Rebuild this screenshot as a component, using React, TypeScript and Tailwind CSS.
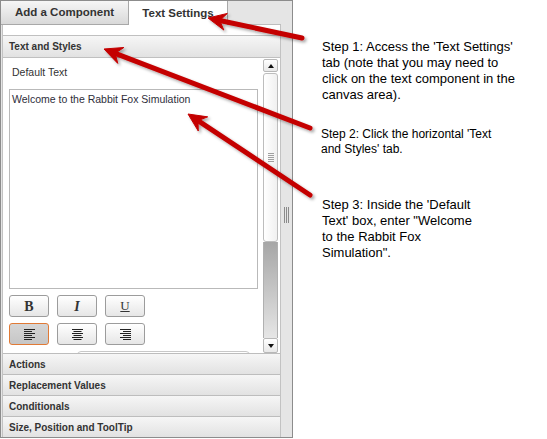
import React from "react"

const headerBg = "bg-gradient-to-b from-[#f6f6f6] to-[#e2e2e2]"

function Arrow({ x1, y1, x2, y2 }: { x1: number; y1: number; x2: number; y2: number }) {
  const dx = x2 - x1
  const dy = y2 - y1
  const len = Math.hypot(dx, dy)
  const ux = dx / len
  const uy = dy / len
  const nx = -uy
  const ny = ux
  const L = 18
  const W = 8.5
  const notch = 6
  const bx = x2 - ux * L
  const by = y2 - uy * L
  const mx = x2 - ux * (L - notch)
  const my = y2 - uy * (L - notch)
  const pts = [
    [x2, y2],
    [bx + nx * W, by + ny * W],
    [mx, my],
    [bx - nx * W, by - ny * W],
  ]
    .map((p) => p.join(","))
    .join(" ")
  return (
    <g filter="url(#shadow)">
      <line x1={x1} y1={y1} x2={mx} y2={my} stroke="#c40000" strokeWidth={5} strokeLinecap="round" />
      <polygon points={pts} fill="#c40000" stroke="#c40000" strokeWidth={1} strokeLinejoin="round" />
    </g>
  )
}

function AlignIcon({ mode }: { mode: "left" | "center" | "right" }) {
  const lens = [11, 8, 11, 8, 11, 8]
  return (
    <svg width="11" height="11" viewBox="0 0 11 11">
      {lens.map((l, i) => {
        const x = mode === "left" ? 0 : mode === "center" ? (11 - l) / 2 : 11 - l
        return <rect key={i} x={x} y={i * 2 - 0.5 + 0.5} width={l} height={1} fill="#222" />
      })}
    </svg>
  )
}

function ToolButton({ children, active }: { children: React.ReactNode; active?: boolean }) {
  return (
    <div
      className={
        "flex h-[22px] w-[40px] items-center justify-center rounded-[3px] border " +
        (active
          ? "border-[#e07a36] bg-gradient-to-b from-[#d6d6d6] to-[#c6c6c6]"
          : "border-[#9c9c9c] bg-gradient-to-b from-[#ffffff] to-[#e6e6e6]")
      }
    >
      {children}
    </div>
  )
}

function Accordion({ label }: { label: string }) {
  return (
    <div className={`flex h-[21px] items-center border-t border-[#bdbdbd] pl-[6px] text-[10px] font-bold text-[#333] ${headerBg}`}>
      {label}
    </div>
  )
}

function Scrollbar() {
  return (
    <div className="mr-[2px] flex w-[15px] flex-col pt-[1px]">
      <div className="flex h-[13px] items-center justify-center rounded-[2px] border border-[#b8b8b8] bg-gradient-to-b from-white to-[#e8e8e8]">
        <svg width="6" height="4" viewBox="0 0 6 4">
          <polygon points="3,0 6,4 0,4" fill="#111" />
        </svg>
      </div>
      <div className="mt-[1px] flex h-[169px] items-center justify-center rounded-[3px] border border-[#bdbdbd] bg-gradient-to-r from-white to-[#f0f0f0]">
        <div className="flex flex-col gap-[1px]">
          {[0, 1, 2, 3, 4].map((i) => (
            <div key={i} className="h-[1px] w-[6px] bg-[#a0a0a0]" />
          ))}
        </div>
      </div>
      <div className="flex-1 border-x border-[#b0b0b0] bg-gradient-to-b from-[#a6a6a6] to-[#e6e6e6]" />
      <div className="flex h-[15px] items-center justify-center rounded-[2px] border border-[#b8b8b8] bg-gradient-to-b from-white to-[#e8e8e8]">
        <svg width="6" height="4" viewBox="0 0 6 4">
          <polygon points="0,0 6,0 3,4" fill="#111" />
        </svg>
      </div>
    </div>
  )
}

function Panel() {
  return (
    <div className="flex h-[438px] w-[293px] shrink-0 flex-col border border-[#8c8c8c] bg-[#e5e5e5] text-[#333]">
      <div className="flex h-[24px] shrink-0">
        <div className="flex w-[128px] items-center justify-center border-b border-r border-[#a8a8a8] bg-gradient-to-b from-[#f6f6f6] to-[#d9d9d9] text-[11.5px] font-bold">
          Add a Component
        </div>
        <div className="flex w-[99px] items-center justify-center border-r border-[#a8a8a8] bg-white pt-[2px] text-[11.5px] font-bold">
          Text Settings
        </div>
        <div className="flex flex-1">
          <div className="flex-1 border-b border-[#bdbdbd]" />
          <div className="w-[11px]" />
        </div>
      </div>
      <div className="flex flex-1 pl-[1px]">
        <div className="flex w-[279px] flex-col border-x border-[#c2c2c2] bg-white">
          <div className="h-[10px]" />
          <div className={`flex h-[23px] items-center border-y border-[#c0c0c0] pl-[6px] text-[10px] font-bold ${headerBg}`}>
            Text and Styles
          </div>
          <div className="flex h-[295px]">
            <div className="flex-1 overflow-hidden">
              <div className="pl-[9px] pt-[7px] text-[10.5px] leading-[14px]">Default Text</div>
              <div className="ml-[6px] mt-[10px] h-[200px] w-[249px] border border-[#b9b9b9] pl-[2px] pt-[2px] text-[10.5px] leading-[14px] text-[#2e2e3a]">
                Welcome to the Rabbit Fox Simulation
              </div>
              <div className="ml-[6px] mt-[6px] flex gap-[8px]">
                <ToolButton>
                  <span className="font-['Liberation_Serif',serif] text-[14px] font-bold text-[#333]">B</span>
                </ToolButton>
                <ToolButton>
                  <span className="font-['Liberation_Serif',serif] text-[14px] font-bold italic text-[#333]">I</span>
                </ToolButton>
                <ToolButton>
                  <span className="font-['Liberation_Serif',serif] text-[13px] text-[#333] underline">U</span>
                </ToolButton>
              </div>
              <div className="ml-[6px] mt-[6px] flex gap-[8px]">
                <ToolButton active>
                  <AlignIcon mode="left" />
                </ToolButton>
                <ToolButton>
                  <AlignIcon mode="center" />
                </ToolButton>
                <ToolButton>
                  <AlignIcon mode="right" />
                </ToolButton>
              </div>
              <div className="ml-[74px] mt-[6px] h-[20px] w-[173px] rounded-[4px] border border-[#c8c8c8]" />
            </div>
            <Scrollbar />
          </div>
          <Accordion label="Actions" />
          <Accordion label="Replacement Values" />
          <Accordion label="Conditionals" />
          <Accordion label="Size, Position and ToolTip" />
        </div>
        <div className="flex flex-1 flex-col pl-[3px] pt-[182px]">
          <div className="flex h-[16px] gap-[1px]">
            <div className="w-[1px] bg-[#8a8a8a]" />
            <div className="w-[1px] bg-[#8a8a8a]" />
            <div className="w-[1px] bg-[#8a8a8a]" />
          </div>
        </div>
      </div>
    </div>
  )
}

export default function App() {
  return (
    <div className="relative flex h-[439px] w-[547px] overflow-hidden bg-white font-['Liberation_Sans',Arial,sans-serif]">
      <Panel />
      <div className="ml-[29px] flex flex-col pt-[39px] text-black">
        <div className="text-[13px] leading-[16px]">
          Step 1: Access the 'Text Settings'
          <br />
          tab (note that you may need to
          <br />
          click on the text component in the
          <br />
          canvas area).
        </div>
        <div className="ml-[-1px] mt-[24px] text-[12px] leading-[15px]">
          Step 2: Click the horizontal 'Text
          <br />
          and Styles' tab.
        </div>
        <div className="mt-[40px] text-[13px] leading-[16px]">
          Step 3: Inside the 'Default
          <br />
          Text' box, enter "Welcome
          <br />
          to the Rabbit Fox
          <br />
          Simulation".
        </div>
      </div>
      <svg className="pointer-events-none absolute inset-0" width="547" height="439">
        <defs>
          <filter id="shadow" x="-20%" y="-50%" width="140%" height="200%">
            <feDropShadow dx="2" dy="2" stdDeviation="1.5" floodColor="#000" floodOpacity="0.35" />
          </filter>
        </defs>
        <Arrow x1={302} y1={38} x2={208} y2={18} />
        <Arrow x1={310} y1={128} x2={104} y2={49} />
        <Arrow x1={310} y1={195} x2={188} y2={114} />
      </svg>
    </div>
  )
}
